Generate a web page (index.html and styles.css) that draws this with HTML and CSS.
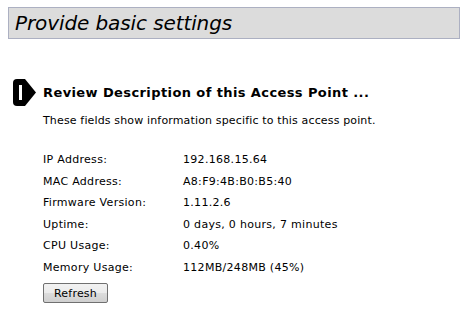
FILE: index.html
```html
<!DOCTYPE html>
<html>
<head>
<meta charset="utf-8">
<link rel="stylesheet" href="styles.css">
</head>
<body>
<div class="page-title">Provide basic settings</div>
<div class="section">
  <div class="section-head">
    <svg class="step-icon" width="23" height="27" viewBox="0 0 23 27">
      <path d="M4 0 H12 L23 13.5 L12 27 H4 Q0 27 0 23 V4 Q0 0 4 0 Z" fill="#000"/>
      <rect x="6" y="6" width="3" height="15" fill="#fff"/>
    </svg>
    <h2 class="section-title">Review Description of this Access Point ...</h2>
  </div>
  <p class="section-desc">These fields show information specific to this access point.</p>
  <div class="info-grid">
    <div class="label">IP Address:</div><div class="value">192.168.15.64</div>
    <div class="label">MAC Address:</div><div class="value">A8:F9:4B:B0:B5:40</div>
    <div class="label">Firmware Version:</div><div class="value">1.11.2.6</div>
    <div class="label">Uptime:</div><div class="value">0 days, 0 hours, 7 minutes</div>
    <div class="label">CPU Usage:</div><div class="value">0.40%</div>
    <div class="label">Memory Usage:</div><div class="value">112MB/248MB (45%)</div>
  </div>
  <button class="refresh-btn">Refresh</button>
</div>
</body>
</html>
```
FILE: styles.css
```css
html, body {
  margin: 0;
  padding: 0;
  background: #fff;
}
body {
  padding: 7px 1px 0 8px;
  font-family: "DejaVu Sans", Verdana, sans-serif;
  font-size: 11px;
  letter-spacing: 0.2px;
  color: #000;
}
.page-title {
  background: #dcdcdc;
  border: 1px solid #acb0c2;
  height: 30px;
  line-height: 30px;
  padding-left: 6px;
  font-size: 20px;
  font-style: italic;
  letter-spacing: -0.1px;
}
.section {
  padding-left: 5px;
  margin-top: 40px;
}
.section-head {
  display: flex;
  align-items: center;
  gap: 7px;
}
.step-icon {
  display: block;
}
.section-title {
  margin: 0;
  font-size: 13px;
  font-weight: bold;
  letter-spacing: 0.4px;
}
.section-desc {
  margin: 8px 0 0 30px;
  letter-spacing: 0.15px;
}
.info-grid {
  display: grid;
  grid-template-columns: 140px auto;
  grid-auto-rows: 21.5px;
  align-items: center;
  margin: 22px 0 0 30px;
  letter-spacing: 0.3px;
}
.refresh-btn {
  margin: 5px 0 0 30px;
  font-family: inherit;
  font-size: 11px;
  letter-spacing: 0.2px;
  width: 65px;
  height: 20px;
  padding: 0;
  border: 1px solid #707070;
  border-radius: 2px;
  background: linear-gradient(#f2f2f2, #ebebeb 50%, #dddddd 50%, #cfcfcf);
}
```
